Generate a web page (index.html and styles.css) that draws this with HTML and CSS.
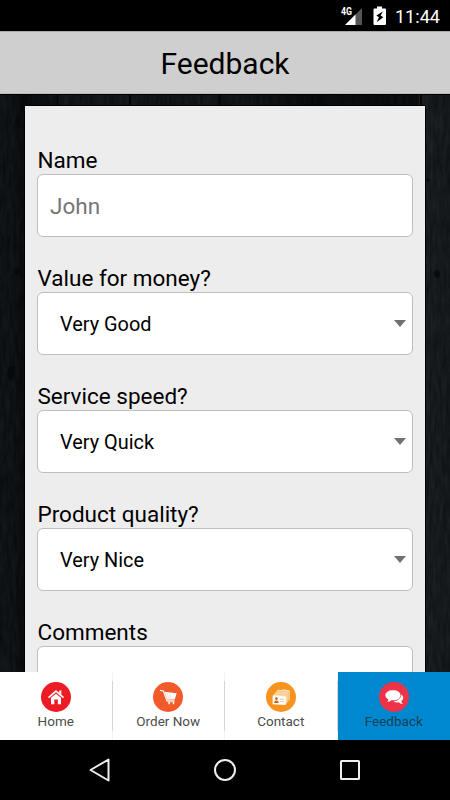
FILE: index.html
```html
<!DOCTYPE html>
<html lang="en">
<head>
<meta charset="utf-8">
<title>Feedback</title>
<link rel="stylesheet" href="styles.css">
</head>
<body>
<div class="phone">
  <div class="status">
    <svg class="signal" width="24" height="20" viewBox="0 0 24 20">
      <path d="M22 2V19H5z" fill="#555"/>
      <path d="M15.500 8.500V19H5z" fill="#fff"/>
      <text x="1" y="9.300" class="net" textLength="11" lengthAdjust="spacingAndGlyphs">4G</text>
    </svg>
    <svg class="battery" width="14" height="20" viewBox="0 0 14 20">
      <path d="M4 0.500h5v2h3q1 0 1 1V18q0 1-1 1H1.500q-1 0-1-1V3.500q0-1 1-1H4z" fill="#fff"/>
      <path d="M9.800 5.500L3.300 9.500L6 11.200L3.600 16.200L10.300 11.200L7.700 9.500z" fill="#000"/>
    </svg>
    <span class="clock">11:44</span>
  </div>
  <header class="header"><h1>Feedback</h1></header>
  <main class="content">
    <svg class="wood" width="450" height="578">
      <defs>
        <filter id="grain" x="0" y="0" width="100%" height="100%" color-interpolation-filters="sRGB">
          <feTurbulence type="fractalNoise" baseFrequency="0.3 0.05" numOctaves="4" seed="8"/>
          <feColorMatrix values="0.08 0 0 0 0.025  0.08 0 0 0 0.040  0.08 0 0 0 0.050  0 0 0 0 1"/>
        </filter>
        <linearGradient id="shade">
          <stop offset="0" stop-color="#000" stop-opacity=".1"/>
          <stop offset=".03" stop-color="#000" stop-opacity=".15"/>
          <stop offset=".055" stop-color="#000" stop-opacity=".5"/>
          <stop offset=".14" stop-color="#000" stop-opacity="0"/>
          <stop offset=".5" stop-color="#000" stop-opacity="0"/>
          <stop offset=".7" stop-color="#000" stop-opacity=".5"/>
          <stop offset=".93" stop-color="#000" stop-opacity=".4"/>
          <stop offset=".94" stop-color="#fff" stop-opacity=".03"/>
          <stop offset="1" stop-color="#fff" stop-opacity=".015"/>
        </linearGradient>
      </defs>
      <rect width="450" height="578" filter="url(#grain)"/>
      <rect width="450" height="578" fill="url(#shade)"/>
      <path d="M57.500 0V12M130 0V12M219.500 0V12M312.500 0V12M421 0V12" stroke="#030507" stroke-width="2"/>
      <path d="M0 .5H450" stroke="#000"/>
      <g fill="#050709" fill-opacity=".75">
        <ellipse cx="17" cy="177" rx="2.500" ry="3.500"/>
        <ellipse cx="11" cy="279" rx="3.500" ry="7"/>
        <ellipse cx="428" cy="86" rx="2.500" ry="1.500"/>
        <ellipse cx="437" cy="180" rx="3" ry="4"/>
      </g>
    </svg>
    <form class="card">
      <div class="field"><label for="name">Name</label><input class="box" id="name" type="text" placeholder="John"></div>
      <div class="field"><label>Value for money?</label><div class="box select"><span>Very Good</span><i class="arrow"></i></div></div>
      <div class="field"><label>Service speed?</label><div class="box select"><span>Very Quick</span><i class="arrow"></i></div></div>
      <div class="field"><label>Product quality?</label><div class="box select"><span>Very Nice</span><i class="arrow"></i></div></div>
      <div class="field"><label>Comments</label><div class="box"></div></div>
    </form>
  </main>
  <nav class="tabs">
    <a class="tab">
      <svg width="30" height="30" viewBox="0 0 30 30">
        <circle cx="15" cy="15" r="15" fill="#ed1c24"/>
        <path d="M7.500 15.600L15 9.200L22.500 15.600" fill="none" stroke="#fff" stroke-width="1.700"/>
        <path d="M18.200 8.500h2.200v4.300l-2.200-1.900z" fill="#fff"/>
        <path d="M10 15.800L15 11.700L20 15.800V22.200H16.800V17.600H13.300V22.200H10z" fill="#fff"/>
      </svg>
      <span>Home</span>
    </a>
    <a class="tab">
      <svg width="30" height="30" viewBox="0 0 30 30">
        <circle cx="15" cy="15" r="15" fill="#f15a29"/>
        <path d="M7 8.300L10.400 9L14 18.800H21.500" fill="none" stroke="#fff" stroke-width="1.200"/>
        <path d="M11.500 9.800L23.700 11.200L21.700 17.500L14.500 17.800z" fill="#fff"/>
        <path d="M13.800 10.500L16.300 17.500M16.500 10.500L18 17.500" stroke="#f15a29" stroke-opacity=".35" stroke-width=".6"/>
        <path d="M14.500 20H21.200" stroke="#fff" stroke-opacity=".7" stroke-width=".7"/>
        <path d="M16.200 19.800v2.500M20.500 19.800v2.500" stroke="#fff" stroke-width="1.400"/>
      </svg>
      <span>Order Now</span>
    </a>
    <a class="tab">
      <svg width="30" height="30" viewBox="0 0 30 30">
        <circle cx="15" cy="15" r="15" fill="#f7941e"/>
        <path d="M7 13.500L10.500 9.500L12 7.800L16 8L17 7.300L23.700 8.600V17.200L19.700 22.500z" fill="#ffe3bd"/>
        <path d="M9 12L20.500 13.200M10.500 10.200L21.500 11.500M12 8.800L22.700 10M21.200 12V20M22.500 10.500V18.500" stroke="#f9ae55" stroke-width=".6"/>
        <path d="M6.600 13.400L19.700 14.700V23L6.600 22.300z" fill="#fff"/>
        <circle cx="10.400" cy="16.700" r="1.400" fill="#c9681b"/>
        <path d="M8 20.900q0-2.300 2.400-2.300t2.400 2.300z" fill="#c9681b"/>
        <path d="M14 16.500l4 .3v1l-4-.3zM14 19l4 .2v.8l-4-.2z" fill="#fbc283"/>
      </svg>
      <span>Contact</span>
    </a>
    <a class="tab active">
      <svg width="30" height="30" viewBox="0 0 30 30">
        <circle cx="15" cy="15" r="15" fill="#ee3349"/>
        <path d="M22.500 12.500C25 15 24.500 17.500 22.300 19Q22.500 21 24 22Q21 22 19.700 20.300Q16.500 20.800 14.500 19.200Q21.500 18.800 22.500 12.500z" fill="#fff"/>
        <path d="M14 8.200C18.600 8.200 21.500 10.300 21.500 13.200S18.600 18.300 14 18.300L12.500 18.200Q10.800 19.800 8 19.800Q9.500 18.700 9.300 17.200C7.500 16.300 6.400 14.900 6.400 13.200C6.400 10.300 9.400 8.200 14 8.200z" fill="#fff"/>
      </svg>
      <span>Feedback</span>
    </a>
  </nav>
  <div class="system">
    <svg width="24" height="26" viewBox="0 0 24 26"><path d="M2.500 13L20.500 2.500V23.500z" fill="none" stroke="#eee" stroke-width="2" stroke-linejoin="round"/></svg>
    <svg width="24" height="26" viewBox="0 0 24 26"><circle cx="12" cy="13" r="10" fill="none" stroke="#eee" stroke-width="2"/></svg>
    <svg width="24" height="26" viewBox="0 0 24 26"><rect x="3" y="4" width="18" height="18" rx=".5" fill="none" stroke="#eee" stroke-width="2"/></svg>
  </div>
</div>
</body>
</html>
```
FILE: styles.css
```css
* { box-sizing: border-box; }
body { margin: 0; font-family: Roboto, sans-serif; color: #000; background: #000; }
.phone { width: 450px; height: 800px; display: flex; flex-direction: column; overflow: hidden; }
.status { height: 31px; flex: none; display: flex; align-items: center; justify-content: flex-end; padding-right: 10px; background: #000; color: #fff; }
.signal { margin-right: 9px; }
.battery { margin-right: 8px; margin-top: 1px; }
.net { font: 700 10.5px Roboto, sans-serif; fill: #fff; }
.clock { font-size: 18.1px; line-height: 31px; padding-top: 2px; }
.header { height: 63px; flex: none; background: #cfcfcf; border-top: 1px solid #aaa; border-bottom: 1px solid #bbb; }
.header h1 { margin: 0; font-size: 30px; font-weight: 400; line-height: 64px; text-align: center; }
.content { position: relative; height: 578px; flex: none; overflow: hidden; padding: 12px 25px 0; }
.wood { position: absolute; left: 0; top: 0; }
.card { position: relative; height: 700px; padding: 41px 12px 0; background: #ededed; box-shadow: 0 0 0 1px #000; }
.field { height: 118px; }
.field label { display: block; height: 27px; padding-left: 0.5px; font-size: 22.5px; line-height: 27px; }
.box { display: block; width: 100%; height: 63px; border: 1px solid #bebebe; border-radius: 6px; background: #fff; }
input.box { padding: 1px 12px 0; font: 22.5px Roboto, sans-serif; }
input.box::placeholder { color: #757575; opacity: 1; }
.select { display: flex; align-items: center; justify-content: space-between; padding: 2px 6px 0 22px; font-size: 19.9px; }
.arrow { border: 6.5px solid transparent; border-top: 7px solid #717171; border-bottom: 0; margin-top: -3px; }
.tabs { height: 68px; flex: none; display: grid; grid-template-columns: repeat(4, 1fr); background: #fff; }
.tab { display: flex; flex-direction: column; align-items: center; padding-top: 10px; border-right: 1px solid; border-image: linear-gradient(#f3f3f3 10px, #d6d6d6 10px, #d6d6d6 58px, #f3f3f3 58px) 1; font-size: 13.5px; line-height: 19px; color: #4d4d4d; }
.tab.active { background: #0088cf; border: 0; color: #17415c; }
.system { height: 60px; flex: none; display: flex; justify-content: space-between; align-items: center; padding: 0 88px; background: #000; }
```
